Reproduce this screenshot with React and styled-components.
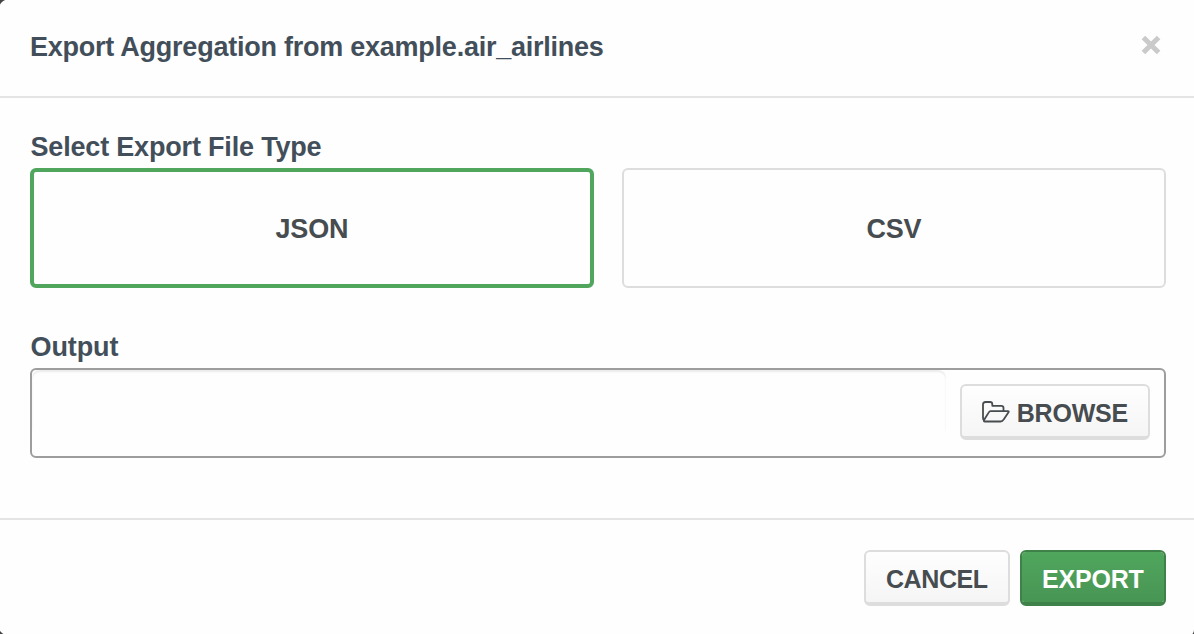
import React from 'react';
import styled, { createGlobalStyle } from 'styled-components';

const GlobalStyle = createGlobalStyle`
  * { box-sizing: border-box; }
  body { margin: 0; overflow: hidden; background: #444; }
  button, input { font: inherit; margin: 0; }
`;

const Dialog = styled.section`
  display: flex;
  flex-direction: column;
  width: 1196px;
  height: 637px;
  margin: -1px 0 -2px -2px;
  padding: 1px 0 2px 2px;
  background: #fefefe;
  border-radius: 12px 0 6px 12px;
  font-family: 'Liberation Sans', Arial, sans-serif;
  font-size: 27px;
  font-weight: 700;
  line-height: 40px;
  color: #464c4f;
`;

const Header = styled.header`
  display: flex;
  justify-content: space-between;
  height: 98px;
  padding: 27px 32px 0 30px;
  border-bottom: 2px solid #e4e4e4;
`;

const Text = styled.span`
  letter-spacing: ${(p) => p.$track}px;
  margin-right: ${(p) => -p.$track}px;
  white-space: nowrap;
`;

const Title = styled.h1`
  margin: 0;
  font-size: 27px;
  color: #424f5a;
`;

const CloseButton = styled.button`
  width: 22px;
  height: 22px;
  margin-top: 7px;
  padding: 0;
  border: 0;
  background: none;
  svg { display: block; }
`;

const Body = styled.main`
  height: 420px;
  padding: 30px 28px 0 30px;
`;

const Label = styled.label`
  display: block;
  height: 40px;
  padding-left: 0.5px;
  line-height: 38px;
  color: #424f5a;
`;

const TypeOptions = styled.div`
  display: flex;
  gap: 28px;
  height: 120px;
  margin-bottom: 40px;
`;

const TypeOption = styled.button`
  width: ${(p) => (p.$selected ? 564 : 544)}px;
  padding: 2px 0 0;
  border: ${(p) => (p.$selected ? '4px solid #50a65d' : '2px solid #dddddd')};
  border-radius: 6px;
  background: #fefefe;
  color: inherit;
  line-height: 40px;
`;

const OutputField = styled.div`
  display: flex;
  height: 90px;
  border: 2px solid #9d9d9d;
  border-radius: 6px;
`;

const OutputInput = styled.input`
  width: 914px;
  height: 66px;
  margin-right: 14px;
  padding: 0 16px;
  border: 0;
  border-radius: 8px;
  outline: 0;
  background: transparent;
  box-shadow: inset 0 2px 2px rgba(0, 0, 0, 0.075);
`;

const Button = styled.button`
  display: flex;
  align-items: center;
  justify-content: center;
  gap: 7px;
  width: ${(p) => p.$width}px;
  height: 56px;
  margin-top: ${(p) => p.$top || 0}px;
  padding: 3px 0 0;
  border: 2px solid ${(p) => (p.$primary ? '#3f8249' : '#dddddd')};
  border-bottom-width: 4px;
  border-radius: 6px;
  background: ${(p) => (p.$primary
    ? 'linear-gradient(#50a65d, #489554)'
    : 'linear-gradient(#fefefe, #f5f5f5)')};
  background-clip: padding-box;
  background-origin: padding-box;
  color: ${(p) => (p.$primary ? '#fff' : '#464c4f')};
  font-size: 25px;
  line-height: 40px;
  svg { margin-bottom: 2px; }
`;

const Footer = styled.footer`
  display: flex;
  justify-content: flex-end;
  gap: 10px;
  height: 116px;
  padding: 30px 28px 0;
  border-top: 2px solid #e4e4e4;
`;

function CloseIcon() {
  return (
    <svg width="22" height="22" viewBox="0 0 22 22">
      <path d="M3.4 3.4 18.6 18.6M18.6 3.4 3.4 18.6" stroke="#cacaca" strokeWidth="5" />
    </svg>
  );
}

function FolderIcon() {
  return (
    <svg width="28" height="22" viewBox="0 0 28 22" fill="none" stroke="#464c4f" strokeWidth="1.8" strokeLinejoin="round">
      <path d="M2 19.2Q1 18.5 1 17V3.5Q1 1 3.5 1H8Q10.3 1 10.3 3.3V4.8H19.3Q21.5 4.8 21.5 7V10" />
      <path d="M8.7 10.2H26Q27.2 10.2 26.5 11.3L21.7 18.4Q20.5 20.5 18.5 20.5H3Q1.2 20.5 2.2 18.8L6.6 11.6Q7.4 10.2 8.7 10.2Z" />
    </svg>
  );
}

export default function App() {
  return (
    <>
      <GlobalStyle />
      <Dialog role="dialog">
        <Header>
          <Title><Text $track={-0.24}>Export Aggregation from example.air_airlines</Text></Title>
          <CloseButton aria-label="Close"><CloseIcon /></CloseButton>
        </Header>
        <Body>
          <Label as="div"><Text $track={-0.18}>Select Export File Type</Text></Label>
          <TypeOptions>
            <TypeOption $selected><Text $track={-0.2}>JSON</Text></TypeOption>
            <TypeOption><Text $track={-0.2}>CSV</Text></TypeOption>
          </TypeOptions>
          <Label htmlFor="output"><Text $track={-0.1}>Output</Text></Label>
          <OutputField>
            <OutputInput id="output" />
            <Button $width={190} $top={14}>
              <FolderIcon />
              <Text $track={-0.2}>BROWSE</Text>
            </Button>
          </OutputField>
        </Body>
        <Footer>
          <Button $width={146}><Text $track={-0.4}>CANCEL</Text></Button>
          <Button $width={146} $primary><Text $track={-0.2}>EXPORT</Text></Button>
        </Footer>
      </Dialog>
    </>
  );
}
